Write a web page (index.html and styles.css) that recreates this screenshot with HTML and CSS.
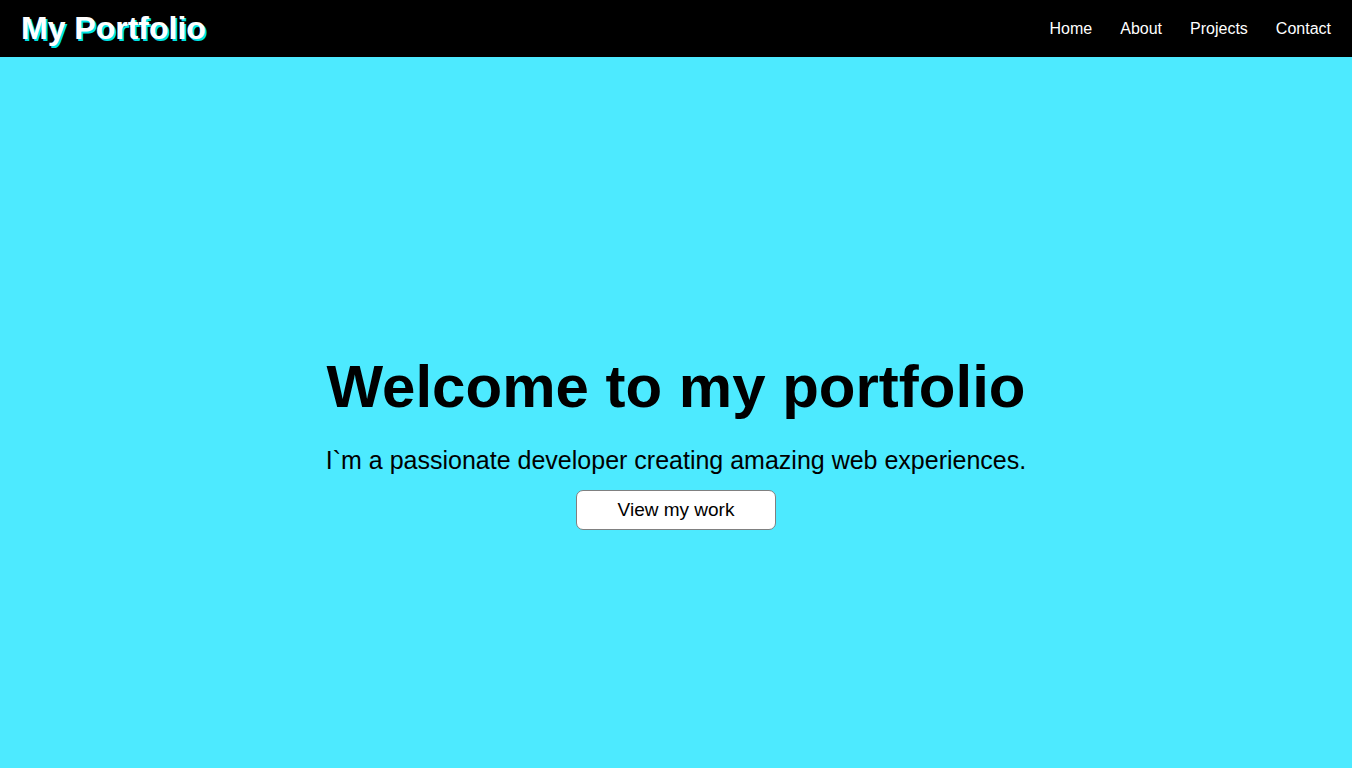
FILE: index.html
```html
<!DOCTYPE html>
<html lang="en">
<head>
<meta charset="utf-8">
<title>My Portfolio</title>
<link rel="stylesheet" href="styles.css">
</head>
<body>
<header class="header">
  <div class="logo">My Portfolio</div>
  <nav class="nav">
    <a href="#">Home</a>
    <a href="#">About</a>
    <a href="#">Projects</a>
    <a href="#">Contact</a>
  </nav>
</header>
<main class="hero">
  <h1 class="hero-title">Welcome to my portfolio</h1>
  <p class="hero-text">I`m a passionate developer creating amazing web experiences.</p>
  <button class="hero-btn">View my work</button>
</main>
</body>
</html>
```
FILE: styles.css
```css
* { box-sizing: border-box; }
html, body { margin: 0; padding: 0; }
body {
  font-family: "Liberation Sans", Arial, sans-serif;
  background: #4deaff;
}
.header {
  height: 57px;
  background: #000;
  display: flex;
  align-items: center;
  justify-content: space-between;
  padding: 0 21px 0 21px;
}
.logo {
  color: #fff;
  font-size: 32px;
  font-weight: bold;
  text-shadow: 2px 2px 0 #00e5e5;
}
.nav {
  display: flex;
  gap: 28px;
}
.nav a {
  color: #fff;
  text-decoration: none;
  font-size: 16px;
}
.hero {
  height: calc(100vh - 57px);
  padding-top: 57px;
  display: flex;
  flex-direction: column;
  align-items: center;
  justify-content: center;
  text-align: center;
}
.hero-title {
  margin: 0 0 25px;
  font-size: 60px;
  font-weight: bold;
  color: #000;
}
.hero-text {
  margin: 0 0 15px;
  font-size: 25px;
  color: #000;
}
.hero-btn {
  width: 200px;
  height: 40px;
  background: #fff;
  border: 1px solid #808080;
  border-radius: 7px;
  font-family: "Liberation Sans", Arial, sans-serif;
  font-size: 19px;
  color: #000;
  cursor: pointer;
}
```
